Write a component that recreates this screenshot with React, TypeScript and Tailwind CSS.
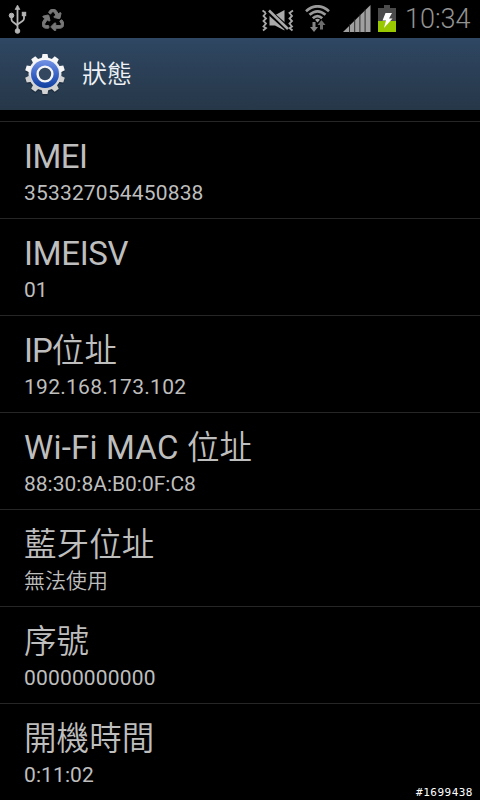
import { FaRecycle } from 'react-icons/fa';

const items = [
  { title: 'IMEI', value: '353327054450838', titleClass: 'tracking-[-0.5px]', valueClass: 'tracking-[0.17px]' },
  { title: 'IMEISV', value: '01', titleClass: 'tracking-[-0.3px]' },
  { title: 'IP', cjk: '位址', value: '192.168.173.102', titleClass: 'tracking-[-1px]', valueClass: 'tracking-[0.27px]' },
  { title: 'Wi-Fi MAC ', cjk: '位址', value: '88:30:8A:B0:0F:C8', titleClass: 'tracking-[0.2px]' },
  { cjk: '藍牙位址', value: '無法使用', valueClass: 'font-[350]' },
  { cjk: '序號', value: '00000000000', valueClass: 'tracking-[0.17px]' },
  { cjk: '開機時間', value: '0:11:02', valueClass: 'tracking-[0.1px]' },
];

const teeth = [0, 36, 72, 108, 144, 180, 216, 252, 288, 324];

function UsbIcon() {
  return (
    <svg width="20" height="32" viewBox="0 0 20 32" fill="#b4b4b4" stroke="#b4b4b4">
      <path d="M9.5 2L12 6.5H7z" strokeWidth="0.6" />
      <path d="M9.5 5v22M3.5 13v3.5q0 1.5 1.5 2.500l4.500 3.500M16 12v3.500q0 1.500-1.500 2.500l-5 3.500" fill="none" strokeWidth="1.8" />
      <circle cx="3.5" cy="12.5" r="2.3" />
      <rect x="14.3" y="9.3" width="3.4" height="3.4" />
      <circle cx="9.5" cy="28" r="2.3" />
    </svg>
  );
}

function MuteIcon() {
  return (
    <svg width="32" height="24" viewBox="0 0 32 24">
      <g fill="none" stroke="#a8a8a8" strokeWidth="1.8">
        <path d="M.5 1.5L4 4 1.500 7 4 9.500 1.500 12 4 14.500l-2.500 3L4 19 1 21.500" />
        <path d="M31 1.500L27.500 4 30 7l-2.500 2.500L30 12l-2.500 2.500 2.500 3-2.500 1.500 3 2.500" />
      </g>
      <path d="M7.500 6.500h5L22.500 1v20.500l-9.500-5H7.500z" fill="#aaa" />
      <path d="M5.500 1.500l20 18" stroke="#000" strokeWidth="5.5" />
      <path d="M7 1.500L26 20" stroke="#aaa" strokeWidth="2.6" />
    </svg>
  );
}

function WifiIcon() {
  return (
    <svg width="26" height="28" viewBox="0 0 26 28">
      <g fill="none" stroke="#999" strokeWidth="2.8">
        <path d="M1 6.200Q12.500-3.500 24 6.200" />
        <path d="M4.500 9.800Q12.500 3 20.500 9.800" />
        <path d="M7.800 13.200Q12.500 9 17.200 13.200" />
      </g>
      <path d="M12.500 17.500l-2.500-2.700q2.500-2.300 5 0z" fill="#a0a0a0" />
      <path d="M7.500 17h3v5h2.500l-4 5-4-5h2.500z" fill="#858585" />
      <path d="M15 24.500h3v-4.500h2.500l-4-5-4 5H15z" fill="#6c6c6c" />
    </svg>
  );
}

function SignalIcon() {
  return (
    <svg width="28" height="28" viewBox="0 0 28 28">
      <path d="M0 27L27.500 0v27z" fill="#a0a0a0" />
      <path d="M6.500 19v8.500M11.700 14v13.500M16.900 9v18.500M22.100 4v23.500" stroke="#222" strokeWidth="0.9" />
    </svg>
  );
}

function BatteryIcon() {
  return (
    <svg width="18" height="28" viewBox="0 0 18 28">
      <path d="M6 0h6v3h6v13H0V3h6z" fill="#4b4b4b" />
      <path d="M0 16h18v11H0z" fill="#99c800" />
      <path d="M7.500 8H14l-3 5.500h3.500L6 23l2-7.500H4.500z" fill="#fff" />
    </svg>
  );
}

function GearIcon() {
  return (
    <svg width="44" height="46" viewBox="-22 -23 44 46">
      <defs>
        <linearGradient id="metal" gradientUnits="userSpaceOnUse" x1="0" y1="-20" x2="0" y2="20">
          <stop offset="0" stopColor="#fff" />
          <stop offset="1" stopColor="#c8c8c8" />
        </linearGradient>
        <linearGradient id="blue" x1="0" y1="0" x2="0" y2="1">
          <stop offset="0" stopColor="#7392e4" />
          <stop offset="0.5" stopColor="#3c66c8" />
          <stop offset="1" stopColor="#103f9e" />
        </linearGradient>
      </defs>
      <g fill="#17212e" opacity="0.5" transform="translate(0 1.5)">
        <circle r="16.5" />
        {teeth.map((a) => (
          <path key={a} d="M-3.400-15l.9-5h5l.9 5z" transform={`rotate(${a})`} />
        ))}
      </g>
      <circle r="16.5" fill="url(#metal)" />
      {teeth.map((a) => (
        <path key={a} d="M-3.400-15l.9-5h5l.9 5z" fill={a > 90 && a < 270 ? '#d2d2d2' : '#f6f6f6'} transform={`rotate(${a})`} />
      ))}
      <circle r="14" fill="url(#blue)" />
      <circle r="7.4" fill="#33475f" stroke="#f6f6f6" strokeWidth="2.4" />
    </svg>
  );
}

export default function App() {
  return (
    <div className="relative flex h-[800px] w-[480px] flex-col overflow-hidden bg-black font-[Roboto,'Noto_Sans_CJK_TC',sans-serif] text-[#bebebe]">
      {/* Status bar */}
      <div className="flex h-[38px] shrink-0 justify-between pr-[9px] pl-2">
        <div className="flex items-start gap-[14px] pt-[3px]">
          <UsbIcon />
          <FaRecycle className="mt-[6px] text-[#777777]" size={22} stroke="#777777" strokeWidth={22} />
        </div>
        <div className="flex items-start pt-[5px]">
          <div className="mt-[4px] mr-[11px]"><MuteIcon /></div>
          <div className="mr-[12px]"><WifiIcon /></div>
          <div className="mr-[7px]"><SignalIcon /></div>
          <BatteryIcon />
          <span className="ml-[9px] w-[66px] text-[27px] leading-[29px] font-[350] whitespace-nowrap text-[#929292]">10:34</span>
        </div>
      </div>

      {/* Title bar */}
      <div className="flex h-[72px] shrink-0 items-center bg-linear-to-b from-[#2f4763] to-[#263748] pl-[23px]">
        <GearIcon />
        <h1 className="mt-px ml-[15px] text-[25px] leading-[36px] font-[350] text-[#eef2f6]">狀態</h1>
      </div>

      {/* Status list */}
      <ul className="pt-[11px]">
        {items.map((item) => (
          <li key={item.value} className="h-[97px] border-t border-[#262626] pt-[15px] pl-6">
            <div className="text-[33px] leading-[40px] whitespace-pre">
              {item.title && <span className={item.titleClass}>{item.title}</span>}
              {item.cjk && <span className="text-[32.5px] font-[350] tracking-[0.1px]">{item.cjk}</span>}
            </div>
            <div className={`mt-[3px] text-[21px] leading-[26px] ${item.valueClass ?? ''}`}>{item.value}</div>
          </li>
        ))}
      </ul>

      <span className="absolute right-[7px] bottom-0 font-['DejaVu_Sans_Mono',monospace] text-[11px] leading-[14px] tracking-[0.5px] text-white">
        #1699438
      </span>
    </div>
  );
}
